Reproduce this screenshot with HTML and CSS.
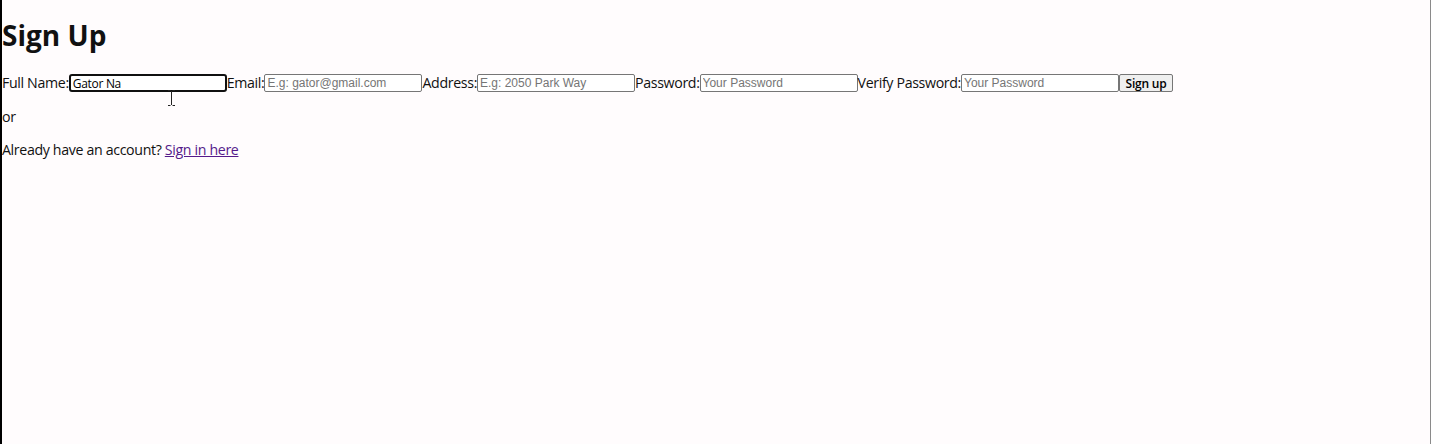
FILE: index.html
```html
<!DOCTYPE html>
<html>
<head>
<meta charset="utf-8">
<link rel="stylesheet" href="styles.css">
</head>
<body>
<div class="page">
  <h1 class="title">Sign Up</h1>
  <form class="form">
    <label class="lbl">Full Name:</label><input class="field focused" type="text" value="Gator Na">
    <label class="lbl">Email:</label><input class="field" type="text" placeholder="E.g: gator@gmail.com">
    <label class="lbl">Address:</label><input class="field" type="text" placeholder="E.g: 2050 Park Way">
    <label class="lbl">Password:</label><input class="field" type="password" placeholder="Your Password">
    <label class="lbl">Verify Password:</label><input class="field" type="password" placeholder="Your Password">
    <button class="btn" type="button">Sign up</button>
  </form>
  <p class="para or">or</p>
  <p class="para">Already have an account? <a class="link" href="#">Sign in here</a></p>
  <svg class="ibeam" width="9" height="16" viewBox="0 0 9 16"><path d="M1 0.5h2.5M5.5 0.5H8M4.5 1v14M1 15.5h2.5M5.5 15.5H8" stroke="#222" stroke-width="1" fill="none"/></svg>
</div>
</body>
</html>
```
FILE: styles.css
```css
html, body {
  margin: 0;
  padding: 0;
  background: #fffcfd;
}
.page {
  position: relative;
  height: 444px;
  box-sizing: border-box;
  border-left: 2px solid #000;
  border-right: 1px solid #8a8a8a;
  width: 1431px;
  font-family: "Open Sans", "Noto Sans", sans-serif;
  font-size: 14.2px;
  letter-spacing: -0.35px;
  color: #111;
}
.title {
  margin: 0;
  padding-top: 16px;
  font-size: 28px;
  font-weight: 700;
  letter-spacing: 0;
  line-height: 38px;
  height: 58px;
  box-sizing: border-box;
}
.form {
  display: flex;
  align-items: center;
  height: 18px;
  margin-top: 16px;
}
.lbl {
  line-height: 18px;
  white-space: nowrap;
}
.field {
  box-sizing: border-box;
  width: 158px;
  height: 18px;
  border: 1px solid #767676;
  border-radius: 2px;
  padding: 0 2px;
  font-family: "Liberation Sans", Arial, sans-serif;
  font-size: 12px;
  letter-spacing: 0;
  background: #fff;
  color: #000;
  outline: none;
}
.field::placeholder {
  color: #757575;
}
.field.focused {
  border: 2px solid #101010;
  border-radius: 3px;
  font-family: "Open Sans", sans-serif;
  letter-spacing: -0.3px;
}
.btn {
  box-sizing: border-box;
  height: 18px;
  width: 54px;
  padding: 0;
  border: 1px solid #767676;
  border-radius: 2px;
  background: #efefef;
  font-family: "Open Sans", sans-serif;
  font-weight: 600;
  font-size: 12px;
  letter-spacing: -0.2px;
  color: #000;
}
.para {
  margin: 0;
  line-height: 20px;
}
.or {
  margin-top: 15px;
}
.para + .para {
  margin-top: 13px;
}
.link {
  color: #551a8b;
}
.ibeam {
  position: absolute;
  left: 165px;
  top: 90px;
}
```
